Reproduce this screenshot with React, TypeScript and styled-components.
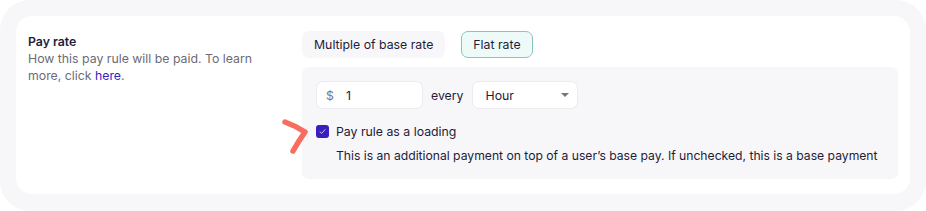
import styled, { createGlobalStyle } from "styled-components";

const GlobalStyle = createGlobalStyle`
  html, body {
    margin: 0;
    padding: 0;
    background: #ffffff;
  }
  body {
    font-family: Inter, "Noto Sans", "Liberation Sans", sans-serif;
    color: #1e1c3a;
    -webkit-font-smoothing: antialiased;
  }
`;

const Frame = styled.div`
  width: 926px;
  height: 211px;
  box-sizing: border-box;
  background: #f7f7f9;
  border-radius: 30px;
  padding: 16px 16px 17px 16px;
`;

const Card = styled.section`
  height: 100%;
  box-sizing: border-box;
  background: #ffffff;
  border-radius: 16px;
  padding: 15px 12px 15px 12px;
  display: grid;
  grid-template-columns: 274px 1fr;
`;

const Info = styled.div`
  padding-top: 2px;
`;

const Title = styled.div`
  font-size: 12.3px;
  font-weight: 600;
  line-height: 17px;
  color: #1e1c3a;
`;

const Help = styled.p`
  margin: 0;
  font-size: 12.3px;
  line-height: 17px;
  color: #6c6b76;
  width: 236px;
`;

const Link = styled.a`
  color: #3b22c4;
  text-decoration: none;
`;

const Content = styled.div`
  display: flex;
  flex-direction: column;
  gap: 9px;
`;

const Tabs = styled.div`
  display: flex;
  gap: 16px;
`;

const Tab = styled.button<{ $active?: boolean }>`
  height: 27px;
  padding: 0 11px;
  border-radius: 7px;
  font-family: inherit;
  font-size: 12.3px;
  color: #1e1c3a;
  cursor: pointer;
  border: 1px solid ${(p) => (p.$active ? "#86c5c0" : "transparent")};
  background: ${(p) => (p.$active ? "#eefaf8" : "#f7f7f9")};
`;

const Panel = styled.div`
  flex: 1;
  background: #f7f7f9;
  border-radius: 7px;
  padding: 14px;
  display: flex;
  flex-direction: column;
`;

const RateRow = styled.div`
  display: flex;
  align-items: center;
  gap: 8px;
`;

const Field = styled.div`
  width: 107px;
  height: 28px;
  box-sizing: border-box;
  background: #ffffff;
  border: 1px solid #ebebf0;
  border-radius: 7px;
  display: flex;
  align-items: center;
  padding: 0 9px;
  font-size: 12.3px;
  gap: 12px;
`;

const Prefix = styled.span`
  color: #7a7983;
`;

const Every = styled.span`
  font-size: 12.3px;
  color: #1e1c3a;
`;

const Select = styled.div`
  width: 106px;
  height: 28px;
  box-sizing: border-box;
  background: #ffffff;
  border: 1px solid #ebebf0;
  border-radius: 7px;
  display: flex;
  align-items: center;
  justify-content: space-between;
  padding: 0 7px 0 13px;
  font-size: 12.3px;
`;

const CheckRow = styled.label`
  position: relative;
  display: flex;
  align-items: center;
  gap: 7px;
  margin-top: 14px;
  font-size: 12.3px;
  line-height: 17px;
`;

const Box = styled.span`
  width: 13px;
  height: 13px;
  border-radius: 3px;
  background: #3a1fc0;
  display: flex;
  align-items: center;
  justify-content: center;
`;

const Note = styled.p`
  margin: 7px 0 0 20px;
  font-size: 12.2px;
  letter-spacing: -0.02px;
  line-height: 17px;
  white-space: nowrap;
  color: #1e1c3a;
`;

const Mark = styled.svg`
  position: absolute;
  left: -36px;
  top: -6px;
`;

export default function App() {
  return (
    <>
      <GlobalStyle />
      <Frame>
        <Card>
          <Info>
            <Title>Pay rate</Title>
            <Help>
              How this pay rule will be paid. To learn more, click{" "}
              <Link href="#">here</Link>.
            </Help>
          </Info>
          <Content>
            <Tabs>
              <Tab>Multiple of base rate</Tab>
              <Tab $active>Flat rate</Tab>
            </Tabs>
            <Panel>
              <RateRow>
                <Field>
                  <Prefix>$</Prefix>
                  <span>1</span>
                </Field>
                <Every>every</Every>
                <Select>
                  <span>Hour</span>
                  <svg width="10" height="6" viewBox="0 0 10 6">
                    <path d="M1 1h8L5 5z" fill="#76757e" />
                  </svg>
                </Select>
              </RateRow>
              <CheckRow>
                <Mark width="32" height="40" viewBox="0 0 32 40">
                  <path
                    d="M5 5 Q16 9 25 15 Q18 25 13 34"
                    fill="none"
                    stroke="#f76d5f"
                    strokeWidth="5.5"
                    strokeLinecap="round"
                    strokeLinejoin="round"
                  />
                </Mark>
                <Box>
                  <svg width="9" height="9" viewBox="0 0 9 9">
                    <path
                      d="M2 4.8 L3.7 6.4 L7 2.6"
                      fill="none"
                      stroke="#c9c2f0"
                      strokeWidth="1"
                      strokeLinecap="round"
                      strokeLinejoin="round"
                    />
                  </svg>
                </Box>
                Pay rule as a loading
              </CheckRow>
              <Note>
                This is an additional payment on top of a user’s base pay. If
                unchecked, this is a base payment
              </Note>
            </Panel>
          </Content>
        </Card>
      </Frame>
    </>
  );
}
